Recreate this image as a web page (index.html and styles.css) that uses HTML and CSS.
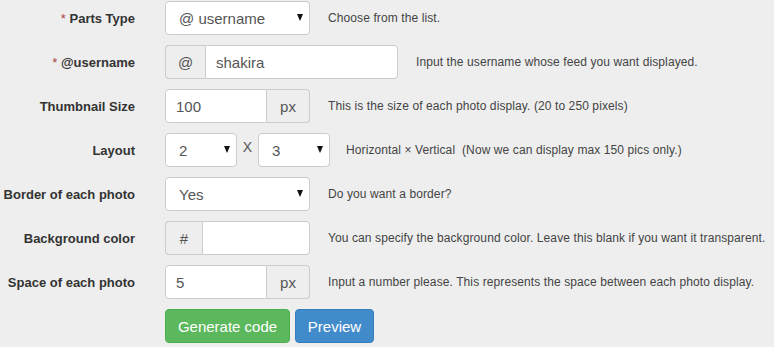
FILE: index.html
```html
<!DOCTYPE html>
<html lang="en">
<head>
<meta charset="utf-8">
<title>Parts generator</title>
<link rel="stylesheet" href="styles.css">
</head>
<body>
<form class="form">
  <div class="row">
    <label class="label"><span class="req">*</span> Parts Type</label>
    <div class="select w145"><span>@ username</span><i class="caret"></i></div>
    <p class="hint">Choose from the list.</p>
  </div>
  <div class="row">
    <label class="label"><span class="req">*</span> @username</label>
    <div class="group w233">
      <span class="addon a40">@</span>
      <span class="input grow">shakira</span>
    </div>
    <p class="hint">Input the username whose feed you want displayed.</p>
  </div>
  <div class="row">
    <label class="label">Thumbnail Size</label>
    <div class="group w145">
      <span class="input grow left">100</span>
      <span class="addon a43 right">px</span>
    </div>
    <p class="hint">This is the size of each photo display. (20 to 250 pixels)</p>
  </div>
  <div class="row">
    <label class="label">Layout</label>
    <div class="layout">
      <div class="select w72"><span>2</span><i class="caret"></i></div>
      <span class="times">X</span>
      <div class="select w72"><span>3</span><i class="caret"></i></div>
    </div>
    <p class="hint hint-layout">Horizontal × Vertical&nbsp; (Now we can display max 150 pics only.)</p>
  </div>
  <div class="row">
    <label class="label">Border of each photo</label>
    <div class="select w145"><span>Yes</span><i class="caret"></i></div>
    <p class="hint">Do you want a border?</p>
  </div>
  <div class="row">
    <label class="label">Background color</label>
    <div class="group w145">
      <span class="addon a37">#</span>
      <span class="input grow"></span>
    </div>
    <p class="hint">You can specify the background color. Leave this blank if you want it transparent.</p>
  </div>
  <div class="row">
    <label class="label">Space of each photo</label>
    <div class="group w145">
      <span class="input grow left">5</span>
      <span class="addon a43 right">px</span>
    </div>
    <p class="hint">Input a number please. This represents the space between each photo display.</p>
  </div>
  <div class="row">
    <span class="label"></span>
    <div class="buttons">
      <button type="button" class="btn btn-green">Generate code</button>
      <button type="button" class="btn btn-blue">Preview</button>
    </div>
  </div>
</form>
</body>
</html>
```
FILE: styles.css
```css
html, body {
  margin: 0;
  padding: 0;
  background: #eeeeee;
}
body {
  font-family: "Liberation Sans", Arial, sans-serif;
  color: #333;
  width: 774px;
  height: 347px;
  overflow: hidden;
}
.form {
  display: flex;
  flex-direction: column;
  gap: 10px;
  padding-top: 1px;
}
.row {
  display: flex;
  align-items: center;
  height: 34px;
}
.label {
  width: 135px;
  flex: none;
  text-align: right;
  font-weight: bold;
  font-size: 13px;
  color: #333;
  margin-right: 30px;
}
.req {
  color: #a94442;
  font-weight: normal;
}
.hint {
  margin: 0 0 0 18px;
  font-size: 12px;
  letter-spacing: 0.1px;
  color: #444;
  white-space: nowrap;
}
.hint-layout { margin-left: 16px; }
.w145 { width: 145px; }
.w233 { width: 233px; }
.w72 { width: 72px; }
.select {
  box-sizing: border-box;
  height: 34px;
  background: #fff;
  border: 1px solid #ccc;
  border-radius: 4px;
  display: flex;
  align-items: center;
  justify-content: space-between;
  padding: 0 6px 0 13px;
  font-size: 15px;
  color: #555;
}
.caret {
  width: 0;
  height: 0;
  border-left: 3.5px solid transparent;
  border-right: 3.5px solid transparent;
  border-top: 7px solid #111;
  margin-top: -2px;
}
.group {
  box-sizing: border-box;
  height: 34px;
  display: flex;
}
.addon {
  box-sizing: border-box;
  flex: none;
  height: 34px;
  display: flex;
  align-items: center;
  justify-content: center;
  background: #eee;
  border: 1px solid #ccc;
  border-right: 0;
  border-radius: 4px 0 0 4px;
  font-size: 15px;
  color: #555;
}
.addon.right {
  border-right: 1px solid #ccc;
  border-left: 0;
  border-radius: 0 4px 4px 0;
}
.a40 { width: 40px; }
.a43 { width: 43px; }
.a37 { width: 37px; }
.input {
  box-sizing: border-box;
  height: 34px;
  background: #fff;
  border: 1px solid #ccc;
  border-radius: 0 4px 4px 0;
  display: flex;
  align-items: center;
  padding: 0 10px;
  font-size: 15px;
  color: #555;
}
.input.left { border-radius: 4px 0 0 4px; }
.grow { flex: 1; }
.layout {
  display: flex;
  align-items: center;
}
.times {
  width: 21px;
  text-align: center;
  font-size: 14px;
  color: #555;
  margin-top: -7px;
}
.buttons {
  display: flex;
  gap: 5px;
}
.btn {
  box-sizing: border-box;
  height: 34px;
  border: 1px solid transparent;
  border-radius: 4px;
  font-family: "Liberation Sans", Arial, sans-serif;
  font-size: 15px;
  color: #fff;
  padding: 0;
  white-space: nowrap;
  cursor: pointer;
}
.btn-green {
  width: 125px;
  background: #5cb85c;
  border-color: #4cae4c;
}
.btn-blue {
  width: 79px;
  background: #428bca;
  border-color: #357ebd;
}
```
